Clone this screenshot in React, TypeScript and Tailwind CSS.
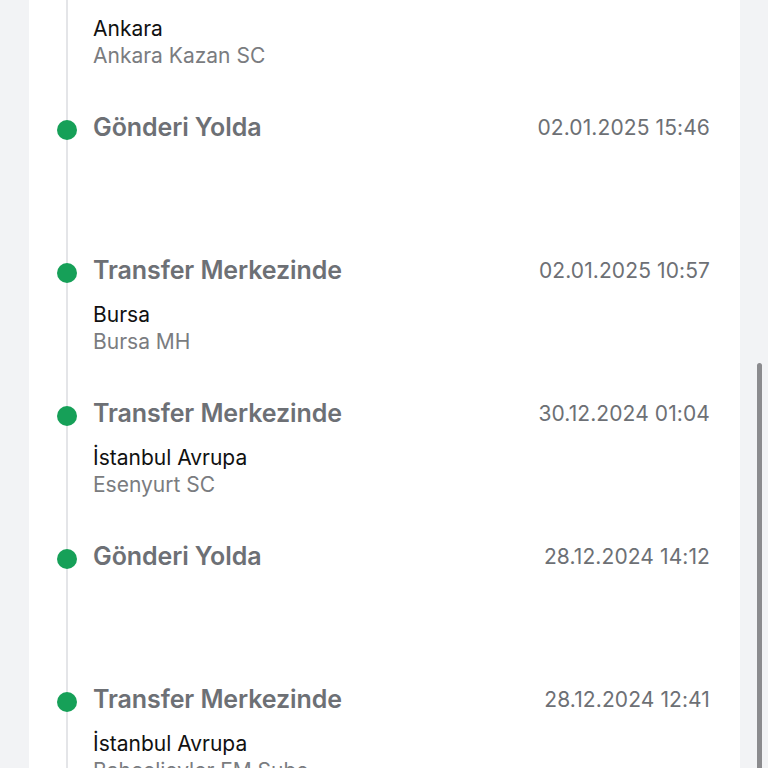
import React from "react";

type Event = {
  title: string;
  date: string;
  city?: string;
  branch?: string;
};

const EVENTS: Event[] = [
  { title: "Transfer Merkezinde", date: "03.01.2025 08:12", city: "Ankara", branch: "Ankara Kazan SC" },
  { title: "Gönderi Yolda", date: "02.01.2025 15:46" },
  { title: "Transfer Merkezinde", date: "02.01.2025 10:57", city: "Bursa", branch: "Bursa MH" },
  { title: "Transfer Merkezinde", date: "30.12.2024 01:04", city: "İstanbul Avrupa", branch: "Esenyurt SC" },
  { title: "Gönderi Yolda", date: "28.12.2024 14:12" },
  { title: "Transfer Merkezinde", date: "28.12.2024 12:41", city: "İstanbul Avrupa", branch: "Bahcelievler FM Şube" },
];

function TimelineItem({ event }: { event: Event }) {
  return (
    <div className="flex h-[143px] shrink-0 pl-[28px] pr-[30px]">
      <div className="flex h-[32px] w-5 items-center">
        <div className="relative z-10 mt-[5px] h-5 w-5 rounded-full bg-[#16a058]" />
      </div>
      <div className="ml-4 flex flex-1 flex-col">
        <div className="flex h-[32px] items-center justify-between pt-[1px]">
          <span className="text-[25px] font-semibold tracking-[-0.1px] text-[#6d7075]">
            {event.title}
          </span>
          <span className="text-[21px] tracking-[0.1px] text-[#6d7075]">{event.date}</span>
        </div>
        {event.city && (
          <div className="mt-[15px] flex flex-col text-[21px] leading-[27px]">
            <span className="text-[#111111]">{event.city}</span>
            <span className="text-[#7a7c80]">{event.branch}</span>
          </div>
        )}
      </div>
    </div>
  );
}

export default function App() {
  return (
    <div className="relative h-screen overflow-hidden bg-[#f2f3f5] font-['Inter',sans-serif]">
      <div className="relative ml-[29px] mr-[28px] flex h-full flex-col overflow-hidden bg-white">
        {/* Timeline line */}
        <div className="absolute bottom-0 left-[37px] top-0 w-[2px] bg-[#e4e5e8]" />
        <div className="-mt-[32px] flex flex-col">
          {EVENTS.map((e, i) => (
            <TimelineItem key={i} event={e} />
          ))}
        </div>
      </div>
      {/* Scrollbar */}
      <div className="absolute bottom-[-20px] right-[6px] top-[363px] w-[5px] rounded-full bg-[#8b8b8e]" />
    </div>
  );
}
